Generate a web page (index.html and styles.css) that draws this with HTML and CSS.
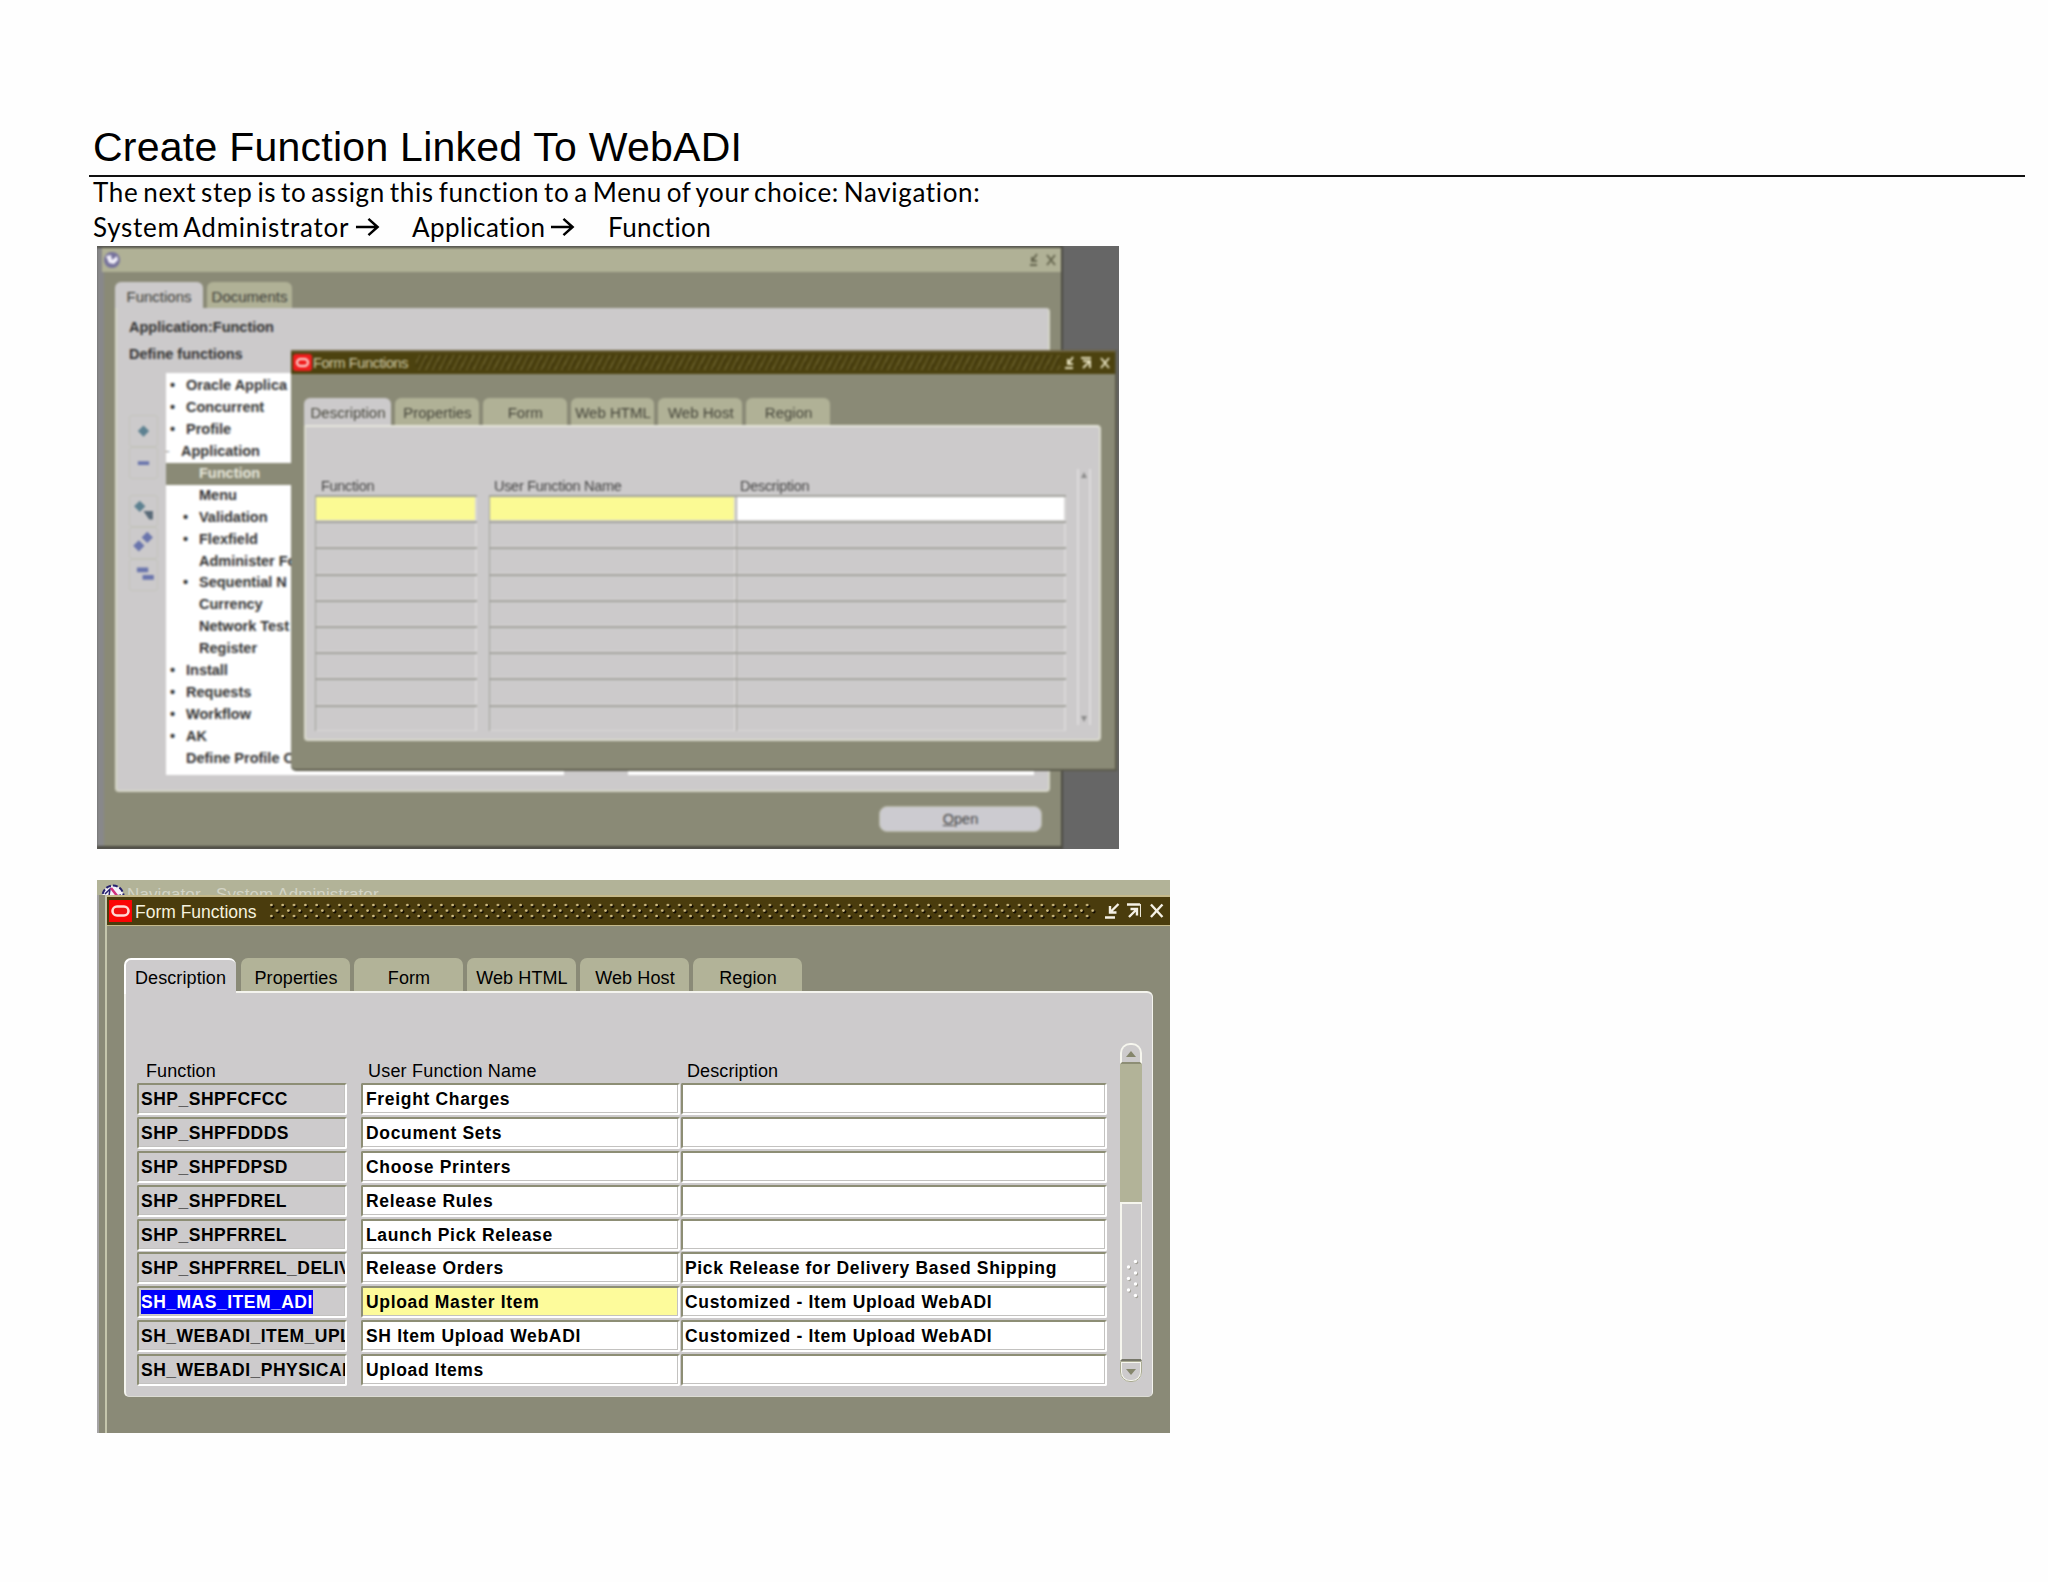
FILE: index.html
```html
<!DOCTYPE html>
<html lang="en">
<head>
<meta charset="utf-8">
<title>Create Function Linked To WebADI</title>
<link rel="stylesheet" href="styles.css">
</head>
<body>
<h1 class="title">Create Function Linked To WebADI</h1>
<p class="lead lead-first">The next step is to assign this function to a Menu of your choice: Navigation:</p>
<p class="lead lead-path">
  <span class="crumb crumb-admin">System Administrator</span>
  <svg class="arrow" viewBox="0 0 26 20"><path d="M1 10H23M14 1.5L23.5 10L14 18.5"/></svg>
  <span class="crumb crumb-app">Application</span>
  <svg class="arrow" viewBox="0 0 26 20"><path d="M1 10H23M14 1.5L23.5 10L14 18.5"/></svg>
  <span class="crumb crumb-fn">Function</span>
</p>

<section class="shot shot-nav">
  <div class="soft">
    <div class="nav">
      <div class="nav-bar">
        <svg class="nav-logo" viewBox="0 0 18 18"><circle cx="9" cy="9" r="8" fill="#77739c"/><path d="M3 5L8 4L9 9L14 5L15 9L11 13L6 12Z" fill="#f2effa"/></svg>
        <svg class="nav-ctl" viewBox="0 0 28 14"><path d="M1 12H8M8 1L3 8M3 4V8H8M18 2L26 12M26 2L18 12"/></svg>
      </div>
      <div class="nav-tabs"><span class="nav-tab on">Functions</span><span class="nav-tab">Documents</span></div>
      <div class="nav-panel">
        <p class="nav-head">Application:Function</p>
        <p class="nav-head">Define functions</p>
        <div class="nav-main">
          <div class="tools">
            <svg viewBox="0 0 28 32"><path class="teal" d="M14 10L20 16L14 22L8 16Z"/></svg>
            <svg viewBox="0 0 28 32"><path class="blue" d="M8 14H20V18H8Z"/></svg>
            <i></i>
            <svg viewBox="0 0 28 32"><path class="teal" d="M10 5L16 11L10 17L4 11Z"/><path class="dark" d="M14 16H24V25H20Z"/></svg>
            <svg viewBox="0 0 28 32"><path class="blue" d="M18 4L24 10L18 16L12 10Z"/><path class="blue" d="M9 13L15 19L9 25L3 19Z"/></svg>
            <svg viewBox="0 0 28 32"><path class="blue" d="M7 8H19V13H7Z"/><path class="blue" d="M13 16H25V21H13Z"/></svg>
          </div>
          <ul class="tree">
            <li class="b1">Oracle Applica</li>
            <li class="b1">Concurrent</li>
            <li class="b1">Profile</li>
            <li class="open">Application</li>
            <li class="l2 sel">Function</li>
            <li class="l2">Menu</li>
            <li class="l2 b2">Validation</li>
            <li class="l2 b2">Flexfield</li>
            <li class="l2">Administer Fo</li>
            <li class="l2 b2">Sequential N</li>
            <li class="l2">Currency</li>
            <li class="l2">Network Test</li>
            <li class="l2">Register</li>
            <li class="b1">Install</li>
            <li class="b1">Requests</li>
            <li class="b1">Workflow</li>
            <li class="b1">AK</li>
            <li>Define Profile O</li>
          </ul>
          <div class="list-right"></div>
        </div>
      </div>
      <button class="open-btn"><u>O</u>pen</button>
    </div>

    <div class="ff">
      <div class="ff-bar">
        <svg class="ff-logo" viewBox="0 0 19 17"><rect width="19" height="17" rx="3" fill="#f01d1d"/><rect x="4" y="5" width="11" height="7" rx="3.5" fill="none" stroke="#ffe4e0" stroke-width="2"/></svg>
        <span class="ff-title">Form Functions</span>
        <span class="hatch"></span>
        <svg class="ff-ctl" viewBox="0 0 48 14"><path d="M1 12H9M9 1L4 8M4 3V8H9M17 2H27M19 5H26V12M19 12L25 6M37 2L45 12M45 2L37 12"/></svg>
      </div>
      <div class="ff-tabs"><span class="on">Description</span><span>Properties</span><span>Form</span><span>Web HTML</span><span>Web Host</span><span>Region</span></div>
      <div class="ff-panel">
        <div class="ff-table">
          <div class="ff-labels"><span>Function</span><span>User Function Name</span><span>Description</span></div>
          <div class="ff-row first"><i></i><i></i><i></i></div>
          <div class="ff-row"><i></i><i></i><i></i></div>
          <div class="ff-row"><i></i><i></i><i></i></div>
          <div class="ff-row"><i></i><i></i><i></i></div>
          <div class="ff-row"><i></i><i></i><i></i></div>
          <div class="ff-row"><i></i><i></i><i></i></div>
          <div class="ff-row"><i></i><i></i><i></i></div>
          <div class="ff-row"><i></i><i></i><i></i></div>
          <div class="ff-row"><i></i><i></i><i></i></div>
        </div>
        <div class="ff-scroll"><svg viewBox="0 0 8 8"><path d="M4 1L7 7H1Z"/></svg><svg viewBox="0 0 8 8"><path d="M4 7L7 1H1Z"/></svg></div>
      </div>
    </div>
  </div>
</section>

<section class="shot shot-form">
  <div class="back-bar">
    <svg class="globe" viewBox="0 0 24 24"><circle cx="12" cy="12" r="10.5" fill="#f6f2fa" stroke="#24206e" stroke-width="2" stroke-dasharray="5 2"/><path d="M4 10L9 5L8 12M16 12L20 11" stroke="#24206e" stroke-width="1.5" fill="none"/><path d="M10 4L17 13" stroke="#d0307c" stroke-width="2.5"/></svg>
    <span class="back-title">Navigator - System Administrator</span>
  </div>
  <div class="win">
    <div class="bar">
      <svg class="logo" viewBox="0 0 23 22"><rect width="23" height="22" fill="#fb0505"/><rect x="3.5" y="6.5" width="16" height="9" rx="4.5" fill="#f01010" stroke="#ffd9d4" stroke-width="2.6"/></svg>
      <span class="bar-title">Form Functions</span>
      <svg class="dots" width="830" height="18">
        <defs><pattern id="d" width="11.33" height="18" patternUnits="userSpaceOnUse">
          <g fill="#120c00"><circle cx="3.6" cy="4.2" r="1.7"/><circle cx="9.2" cy="9.8" r="1.7"/><circle cx="3.6" cy="15.2" r="1.7"/></g>
          <g fill="#d3bf85"><circle cx="2.4" cy="3" r="1.35"/><circle cx="8" cy="8.6" r="1.35"/><circle cx="2.4" cy="14" r="1.35"/></g>
        </pattern></defs>
        <rect width="828" height="18" fill="url(#d)"/>
      </svg>
      <svg class="ctl" viewBox="0 0 60 16"><path d="M0 14.5H10M13.5 1L6 8.5M5 3V9.5H11.5"/><path d="M22 1.5H35M24 14L31 7M25.5 6H32V12.5"/><path d="M35.5 1V14" stroke-width="1"/><path d="M46 1.5L57.5 14M57.5 1.5L46 14"/></svg>
    </div>
    <div class="tabs"><span class="on">Description</span><span>Properties</span><span>Form</span><span>Web HTML</span><span>Web Host</span><span>Region</span></div>
    <div class="panel">
      <div class="table">
        <div class="labels"><span>Function</span><span>User Function Name</span><span>Description</span></div>
        <div class="row"><b>SHP_SHPFCFCC</b><b>Freight Charges</b><b></b></div>
        <div class="row"><b>SHP_SHPFDDDS</b><b>Document Sets</b><b></b></div>
        <div class="row"><b>SHP_SHPFDPSD</b><b>Choose Printers</b><b></b></div>
        <div class="row"><b>SHP_SHPFDREL</b><b>Release Rules</b><b></b></div>
        <div class="row"><b>SHP_SHPFRREL</b><b>Launch Pick Release</b><b></b></div>
        <div class="row"><b>SHP_SHPFRREL_DELIV</b><b>Release Orders</b><b>Pick Release for Delivery Based Shipping</b></div>
        <div class="row current"><b><mark>SH_MAS_ITEM_ADI</mark></b><b>Upload Master Item</b><b>Customized - Item Upload WebADI</b></div>
        <div class="row"><b>SH_WEBADI_ITEM_UPL</b><b>SH Item Upload WebADI</b><b>Customized - Item Upload WebADI</b></div>
        <div class="row"><b>SH_WEBADI_PHYSICAL</b><b>Upload Items</b><b></b></div>
      </div>
      <div class="scroll">
        <div class="btn up"><svg viewBox="0 0 10 6"><path d="M5 0L10 6H0Z"/></svg></div>
        <div class="track"></div>
        <div class="thumb"><svg viewBox="0 0 14 40"><g fill="#a3a199"><circle cx="11.5" cy="3.5" r="1.7"/><circle cx="4.5" cy="9" r="1.7"/><circle cx="11.5" cy="15" r="1.7"/><circle cx="4.5" cy="20.5" r="1.7"/><circle cx="11.5" cy="26" r="1.7"/><circle cx="4.5" cy="32" r="1.7"/><circle cx="11.5" cy="37.5" r="1.7"/></g><g fill="#fff"><circle cx="10.5" cy="2.5" r="1.7"/><circle cx="3.5" cy="8" r="1.7"/><circle cx="10.5" cy="14" r="1.7"/><circle cx="3.5" cy="19.5" r="1.7"/><circle cx="10.5" cy="25" r="1.7"/><circle cx="3.5" cy="31" r="1.7"/><circle cx="10.5" cy="36.5" r="1.7"/></g></svg></div>
        <div class="btn down"><svg viewBox="0 0 10 6"><path d="M5 6L10 0H0Z"/></svg></div>
      </div>
    </div>
  </div>
</section>
</body>
</html>
```
FILE: styles.css
```css
* { box-sizing: border-box; }
body {
  margin: 0;
  padding: 110px 23px 0 89px;
  height: 1582px;
  background: #fefefe;
  color: #000;
  font-family: "Liberation Sans", Arial, sans-serif;
}
p, ul { margin: 0; padding: 0; list-style: none; }

/* Document heading */
.title {
  margin: 0;
  height: 67px;
  padding: 13px 0 0 4px;
  border-bottom: 2px solid #111;
  font-size: 41px;
  font-weight: 400;
  line-height: 48px;
  letter-spacing: 0.25px;
}
.lead {
  padding-left: 4px;
  font-family: Lato, sans-serif;
  font-size: 26px;
  font-variant-ligatures: none;
  letter-spacing: 0.4px;
  white-space: nowrap;
}
.lead-first { line-height: 31px; letter-spacing: 0.65px; word-spacing: -2.4px; }
.lead-path { display: flex; align-items: center; height: 38px; line-height: 38px; }
.crumb-admin { width: 262px; letter-spacing: 0.75px; word-spacing: -3px; }
.crumb-app { width: 138px; margin-left: 32px; }
.crumb-fn { margin-left: 33px; letter-spacing: 0.4px; }
.arrow { width: 25px; height: 20px; fill: none; stroke: #000; stroke-width: 2.6; }

.shot { margin-left: 8px; overflow: hidden; }

/* Navigator screenshot, low resolution in the document */
.shot-nav { position: relative; width: 1022px; height: 603px; background: #666; }
.soft { height: 603px; filter: blur(0.9px); }
.nav {
  display: flex;
  flex-direction: column;
  width: 966px;
  height: 603px;
  background: #8a8a76;
  border: solid #4c4b42;
  border-width: 2px 2px 3px 0;
  box-shadow: inset 7px 0 #88888a;
}
.nav-bar {
  display: flex;
  align-items: center;
  justify-content: space-between;
  height: 24px;
  margin-left: 5px;
  padding: 0 4px 0 1px;
  background: #b0b196;
}
.nav-logo { width: 18px; height: 18px; }
.nav-ctl { width: 28px; height: 14px; fill: none; stroke: #66664f; stroke-width: 2; }
.nav-tabs { display: flex; gap: 4px; height: 36px; padding: 10px 0 0 18px; }
.nav-tab {
  width: 85px;
  padding-top: 3px;
  border-radius: 6px 6px 0 0;
  background: #b0b196;
  color: #3d3d38;
  font-size: 15px;
  line-height: 24px;
  text-align: center;
}
.nav-tab.on { width: 88px; background: #cccacb; }
.nav-panel {
  height: 484px;
  margin: 0 11px 0 18px;
  padding-top: 12px;
  border: solid #d6d6c8;
  border-width: 0 2px 2px;
  border-radius: 0 4px 4px 4px;
  background: #cccacb;
}
.nav-head {
  height: 27px;
  padding-left: 12px;
  font-size: 14.5px;
  font-weight: 700;
  line-height: 14px;
  color: #333;
}
.nav-main { display: flex; height: 402px; margin-top: -1px; }
.tools {
  display: grid;
  grid-template-rows: 32px 32px 16px 32px 32px 32px;
  align-content: start;
  width: 49px;
  padding: 42px 8px 0 12px;
}
.tools svg { width: 29px; height: 32px; border: 1px solid #c3c4bc; border-radius: 3px; }
.teal { fill: #5d8191; }
.blue { fill: #6a75ad; }
.dark { fill: #596a78; }
.tree {
  width: 398px;
  padding-top: 2px;
  background: #fff;
  color: #333;
  font-size: 14.5px;
  font-weight: 700;
  line-height: 21.9px;
}
.tree li { height: 21.94px; padding-left: 20px; white-space: nowrap; }
.tree li::before { display: inline-block; width: 16px; margin-left: -16px; content: ""; }
.tree .b1::before, .tree .b2::before { content: "•"; }
.tree .open { padding-left: 15px; }
.tree .open::before { content: "-"; color: #999; font-weight: 400; }
.tree .l2 { padding-left: 33px; }
.tree .sel { background: #8a8a76; color: #e8e8dc; }
.list-right { flex: 1; margin: 0 14px 0 64px; background: #fff; }
.open-btn {
  align-self: flex-end;
  width: 163px;
  height: 26px;
  margin: 14px 19px 0 0;
  padding: 0;
  border: 1px solid #b8b8a6;
  border-radius: 8px;
  background: #cccbd0;
  color: #444;
  font: 14.5px/24px "Liberation Sans", Arial, sans-serif;
}

.ff {
  position: absolute;
  left: 194px;
  top: 104px;
  width: 826px;
  height: 421px;
  border: solid #5c5b4c;
  border-width: 0 2px 2px 0;
  border-radius: 0 0 0 5px;
  background: #8a8a76;
}
.ff-bar {
  display: flex;
  align-items: center;
  height: 24px;
  padding: 0 3px 1px 2px;
  border-top: 2px solid #6e6442;
  background: #4c420f;
}
.ff-logo { width: 19px; height: 17px; }
.ff-title { width: 103px; margin-left: 1px; color: #d0cba8; font-size: 14.5px; letter-spacing: -0.4px; }
.hatch {
  flex: 1;
  height: 15px;
  margin-right: 4px;
  background: repeating-linear-gradient(118deg, #4c420f 0 3px, #6a5f2b 3px 4.5px, #3f360b 4.5px 6px);
}
.ff-ctl { width: 48px; height: 14px; fill: none; stroke: #e4dfbd; stroke-width: 2; }
.ff-tabs { display: flex; gap: 4px; height: 51px; padding: 24px 0 0 13px; }
.ff-tabs span {
  width: 83.8px;
  padding-left: 1px;
  border-radius: 6px 6px 0 0;
  background: #b0b196;
  color: #45453a;
  font-size: 15px;
  line-height: 30px;
  text-align: center;
}
.ff-tabs .on { width: 87px; background: #cccacb; }
.ff-panel {
  display: flex;
  width: 797px;
  height: 316px;
  margin-left: 13px;
  border: 2px solid #dcdccf;
  border-top-color: #e6e6dc;
  border-radius: 0 4px 4px 4px;
  background: #cccacb;
}
.ff-table { width: 771px; padding: 49px 0 0 9px; }
.ff-labels, .ff-row { display: grid; grid-template-columns: 162px 12px 247px 330px; }
.ff-labels { height: 19px; color: #444; font-size: 14.5px; line-height: 21px; letter-spacing: -0.3px; white-space: nowrap; }
.ff-labels span:nth-child(1) { padding-left: 6px; }
.ff-labels span:nth-child(2) { grid-column: 3; padding-left: 5px; }
.ff-labels span:nth-child(3) { padding-left: 4px; }
.ff-row { height: 26.2px; }
.ff-row i { border: solid #a2a29c; border-width: 2px 0 0 1px; box-shadow: inset -2px -1px #dad8d8; }
.ff-row i:nth-child(2) { grid-column: 3; }
.ff-row.first i { background: #fbfa94; }
.ff-row.first i:last-child { background: #fff; }
.ff-scroll {
  display: flex;
  flex-direction: column;
  justify-content: space-between;
  width: 14px;
  height: 256px;
  margin-top: 42px;
  padding: 2px 1px;
  border: solid #dddcdc;
  border-width: 0 2px;
}
.ff-scroll svg { width: 8px; height: 8px; fill: #8b8b8b; }

/* Form Functions screenshot */
.shot-form {
  width: 1073px;
  height: 553px;
  margin-top: 31px;
  padding-left: 8px;
  background: #8a8a77;
  box-shadow: inset 2px 0 #a5a4a5;
}
.back-bar {
  display: flex;
  height: 15px;
  margin-left: -8px;
  padding-left: 4px;
  overflow: hidden;
  background: #b2b398;
}
.globe { flex: none; width: 24px; height: 24px; margin-top: 4px; }
.back-title {
  margin: 7px 0 0 2px;
  color: #d3d4c5;
  font-size: 17px;
  line-height: 16px;
  letter-spacing: 0.1px;
  white-space: nowrap;
}
.win { height: 538px; border-left: 2px solid #c5c6ac; }
.bar {
  display: flex;
  align-items: center;
  height: 31px;
  padding: 0 5px 0 2px;
  border: solid #c5b98a;
  border-width: 2px 0 1px;
  background: #4a3c0d;
}
.logo { width: 23px; height: 22px; }
.bar-title {
  width: 134px;
  margin-left: 3px;
  padding-top: 1px;
  color: #f6f2df;
  font-size: 17.5px;
  line-height: 22px;
  white-space: nowrap;
}
.dots { width: 830px; height: 18px; }
.ctl { width: 60px; height: 16px; margin-left: 7px; fill: none; stroke: #f5f1e6; stroke-width: 2.4; }
.tabs { display: flex; gap: 4px; height: 65px; padding: 32px 0 0 17px; }
.tabs span {
  width: 109px;
  padding-left: 1px;
  border-radius: 7px 7px 0 0;
  background: #b2b398;
  font-size: 18px;
  line-height: 40px;
  letter-spacing: 0.1px;
  text-align: center;
}
.tabs .on {
  z-index: 1;
  width: 112px;
  height: 36px;
  margin-right: 1px;
  padding: 0 1px 0 0;
  border: solid #fff;
  border-width: 2px 0 0 2px;
  background: #cdcbcc;
  line-height: 36px;
}
.panel {
  display: flex;
  width: 1029px;
  height: 406px;
  margin-left: 17px;
  border: solid #f4f4ee;
  border-width: 2px 1px 1px 2px;
  border-bottom-color: #dcdcd4;
  border-radius: 0 6px 5px 5px;
  background: #cdcbcc;
}
.table { width: 970px; margin-left: 11px; padding-top: 66px; }
.labels, .row { display: grid; grid-template-columns: 210px 14px 319px 1px 426px; }
.labels { height: 24px; font-size: 18px; line-height: 24px; letter-spacing: 0.1px; }
.labels span:nth-child(1) { padding-left: 9px; }
.labels span:nth-child(2) { grid-column: 3; padding-left: 7px; letter-spacing: 0.2px; }
.labels span:nth-child(3) { grid-column: 5; padding-left: 6px; }
.row { height: 33.9px; }
.row b {
  height: 32px;
  padding-left: 3px;
  overflow: hidden;
  border: 2px solid;
  border-color: #8d8e75 #fff #fff #8d8e75;
  border-radius: 2px;
  box-shadow: inset -1px -1px #c3c2c0;
  background: #fff;
  font-size: 17.5px;
  line-height: 29px;
  letter-spacing: 0.67px;
  white-space: nowrap;
}
.row b:nth-child(1) { padding-left: 2px; background: #cdcbcc; letter-spacing: 0.5px; }
.row b:nth-child(2) { grid-column: 3; }
.row b:nth-child(3) { grid-column: 5; padding-left: 2px; }
.row.current b:nth-child(2) { background: #fdfb9b; }
.row mark { display: inline-block; height: 24px; background: #0000fb; color: #fff; line-height: 25px; }
.scroll { width: 22px; margin: 50px 0 0 13px; }
.btn {
  display: flex;
  align-items: center;
  justify-content: center;
  height: 21px;
  border: 2px solid #f6f6ee;
  background: #cdcbcc;
}
.up { border-bottom-color: #8d8e75; border-radius: 10px 10px 0 0; }
.down { border-radius: 0 0 10px 10px; outline: 1px solid #a9aa92; outline-offset: -1px; }
.btn svg { width: 10px; height: 6px; fill: #85866c; }
.track { height: 138px; background: #b2b398; }
.thumb {
  display: flex;
  align-items: center;
  justify-content: center;
  height: 159px;
  border: solid #f6f6ee;
  border-width: 2px 1px 2px 2px;
  border-bottom-color: #77776a;
}
.thumb svg { width: 14px; height: 40px; margin-top: -6px; }
```
